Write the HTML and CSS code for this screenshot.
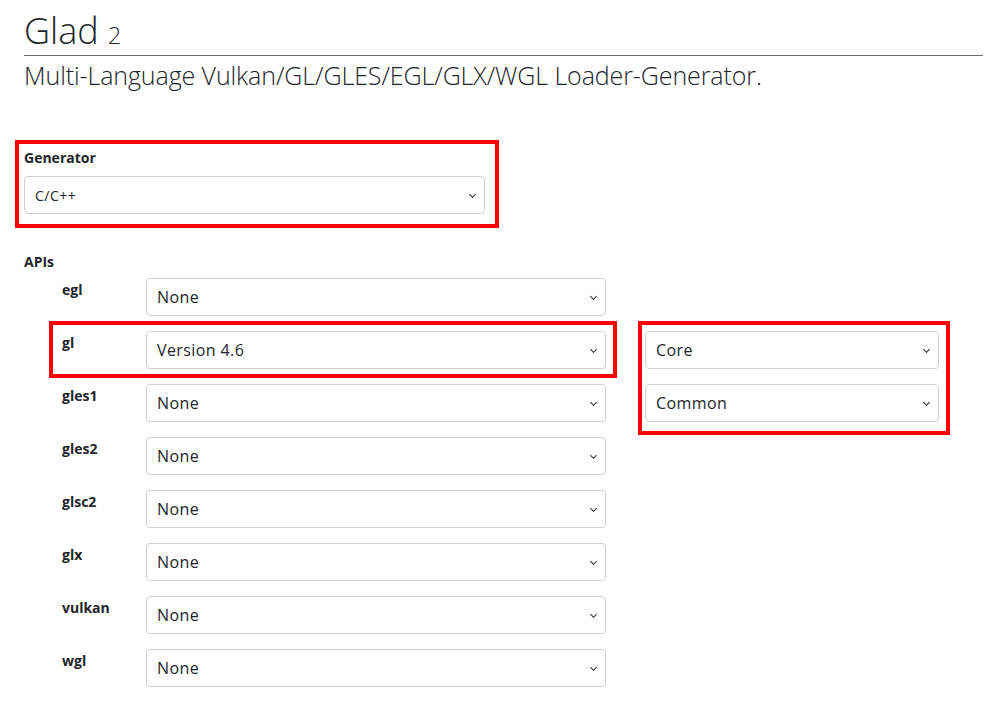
FILE: index.html
```html
<!DOCTYPE html>
<html lang="en">
<head>
<meta charset="utf-8">
<title>Glad 2</title>
<link rel="stylesheet" href="styles.css">
</head>
<body>
<div class="page">
  <header class="header">
    <h1 class="title">Glad <small class="ver">2</small></h1>
    <p class="lead">Multi-Language Vulkan/GL/GLES/EGL/GLX/WGL Loader-Generator.</p>
  </header>

  <form class="form">
    <div class="group generator">
      <label class="glabel">Generator</label>
      <div class="sel wide"><select><option>C/C++</option></select></div>
    </div>

    <div class="group apis">
      <div class="glabel">APIs</div>
      <div class="api-grid">
        <div class="api-label">egl</div>
        <div class="sel"><select><option>None</option></select></div>
        <div></div>

        <div class="api-label">gl</div>
        <div class="sel"><select><option>Version 4.6</option></select></div>
        <div class="sel side"><select><option>Core</option></select></div>

        <div class="api-label">gles1</div>
        <div class="sel"><select><option>None</option></select></div>
        <div class="sel side"><select><option>Common</option></select></div>

        <div class="api-label">gles2</div>
        <div class="sel"><select><option>None</option></select></div>
        <div></div>

        <div class="api-label">glsc2</div>
        <div class="sel"><select><option>None</option></select></div>
        <div></div>

        <div class="api-label">glx</div>
        <div class="sel"><select><option>None</option></select></div>
        <div></div>

        <div class="api-label">vulkan</div>
        <div class="sel"><select><option>None</option></select></div>
        <div></div>

        <div class="api-label">wgl</div>
        <div class="sel"><select><option>None</option></select></div>
        <div></div>
      </div>
    </div>
  </form>

  <div class="mark mark-gen"></div>
  <div class="mark mark-gl"></div>
  <div class="mark mark-side"></div>
</div>
</body>
</html>
```

FILE: styles.css
```css
* { box-sizing: border-box; }
html, body { margin: 0; padding: 0; background: #fff; }
body {
  font-family: "Open Sans", "Noto Sans", sans-serif;
  color: #212529;
}
.page {
  position: relative;
  padding: 0 10px 0 24px;
  min-height: 721px;
}
.header { padding-top: 9px; }
.title {
  margin: 0;
  font-weight: 300;
  font-size: 36px;
  line-height: 44px;
  border-bottom: 1px solid #6c6c6c;
  height: 47px;
}
.ver { font-size: 23px; font-weight: 300; }
.lead {
  margin: 4px 0 0 0;
  font-size: 25px;
  font-weight: 300;
  line-height: 30px;
  letter-spacing: -0.1px;
}
.form { margin-top: 58px; width: 915px; }
.group { display: flex; flex-direction: column; }
.glabel {
  font-weight: 700;
  font-size: 14px;
  line-height: 20px;
  margin-bottom: 6px;
}
.generator .glabel { margin-bottom: 8px; }
.sel { position: relative; height: 38px; }
.sel.wide { width: 461px; }
.sel select {
  appearance: none;
  -webkit-appearance: none;
  width: 100%;
  height: 38px;
  border: 1px solid #cfcfcf;
  border-radius: 4px;
  background: #fff;
  font-family: "Open Sans", "Noto Sans", sans-serif;
  font-size: 16px;
  letter-spacing: 0.4px;
  color: #212529;
  padding: 0 28px 0 10px;
}
.generator .sel select { font-size: 14px; letter-spacing: 0.5px; }
.sel::after {
  content: "";
  position: absolute;
  right: 10px;
  top: 16px;
  width: 4px;
  height: 4px;
  border-right: 1.3px solid #333;
  border-bottom: 1.3px solid #333;
  transform: rotate(45deg);
  pointer-events: none;
}
.apis { margin-top: 38px; }
.api-grid {
  display: grid;
  grid-template-columns: 84px 460px 333px;
  column-gap: 0;
  row-gap: 15px;
  padding-left: 38px;
  margin-top: 0;
}
.sel.side { margin-left: 39px; width: 294px; }
.api-label {
  font-weight: 700;
  font-size: 14px;
  line-height: 20px;
  padding-top: 2px;
}
.mark {
  position: absolute;
  border: 4px solid #ff0000;
  pointer-events: none;
}
.mark-gen { left: 15px; top: 140px; width: 484px; height: 88px; }
.mark-gl { left: 49px; top: 321px; width: 568px; height: 57px; }
.mark-side { left: 638px; top: 321px; width: 312px; height: 114px; }
```
